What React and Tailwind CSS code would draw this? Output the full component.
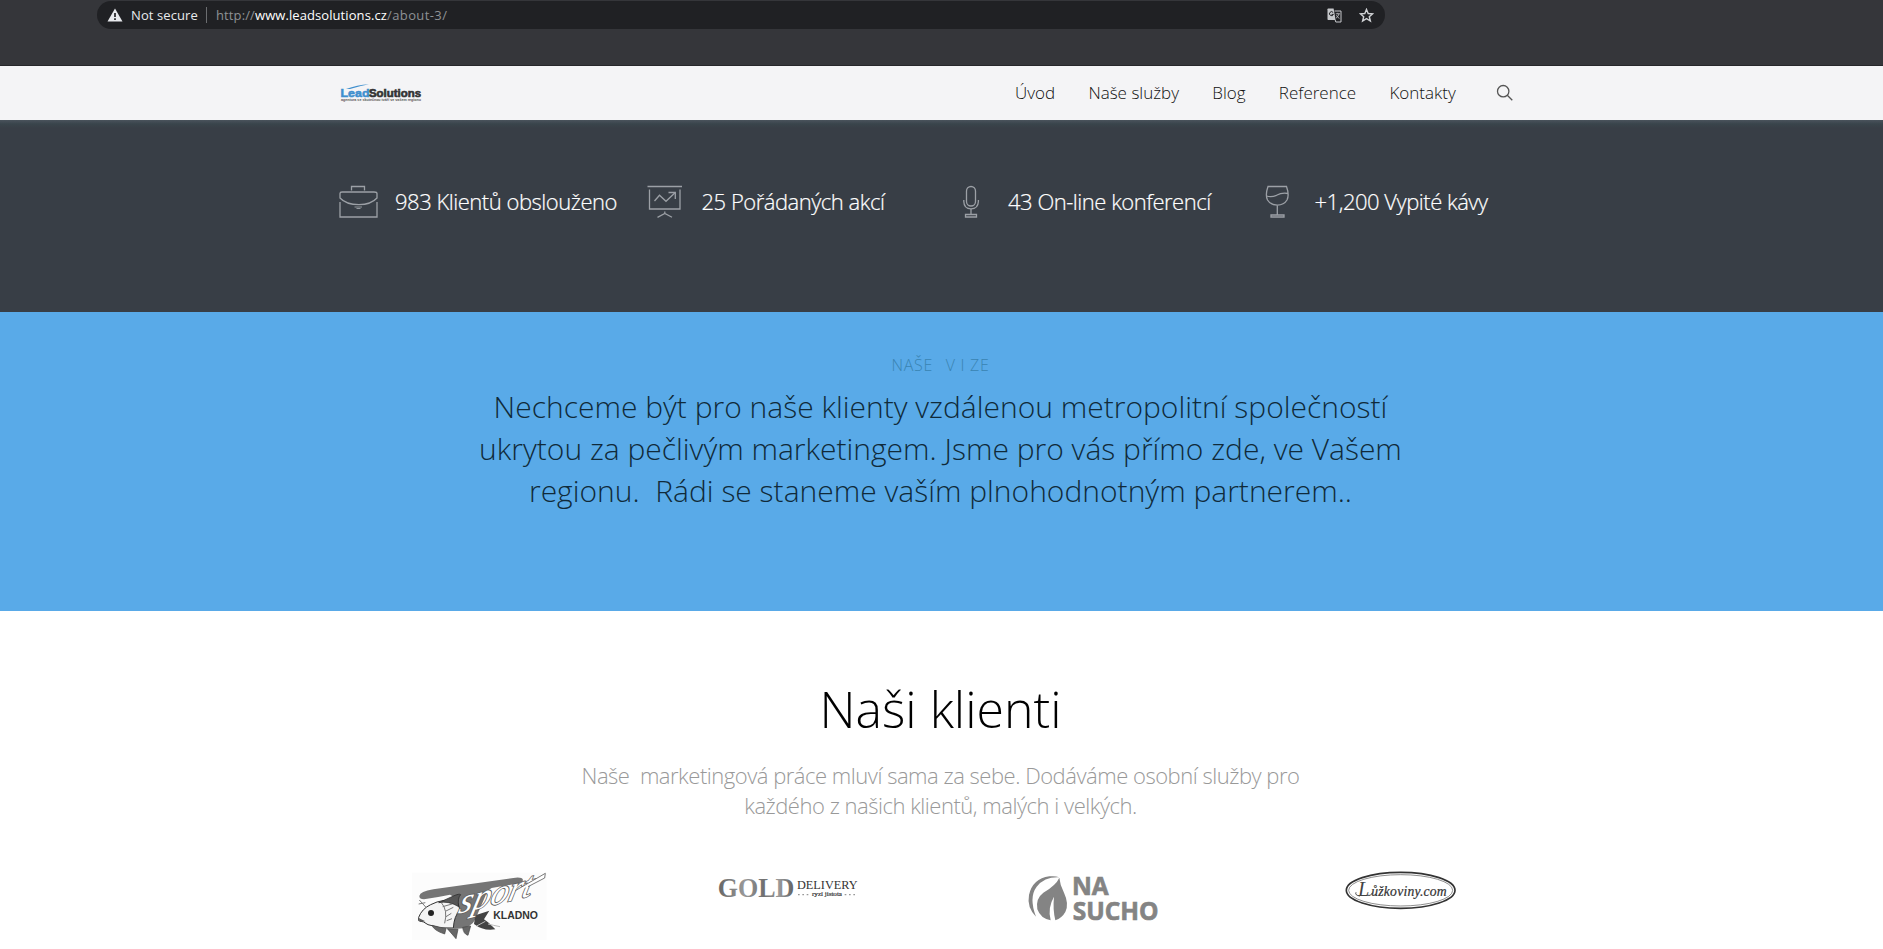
const NAV = ['Úvod', 'Naše služby', 'Blog', 'Reference', 'Kontakty'];

function BrowserBar() {
  return (
    <div className="h-[66px] border-b border-[#26272a] bg-[#35363a] pl-[97px] pt-px">
      <div className="flex h-7 w-[1288px] items-center rounded-full bg-[#202124] pl-[10px] pr-[11px] text-[13px]">
        <svg className="h-[14px] w-4" viewBox="0 0 16 14">
          <path d="M8 0.5 L15.5 13.5 H0.5 Z" fill="#e8eaed" />
          <path d="M8 5v4M8 10.3v1.7" stroke="#202124" strokeWidth="1.7" />
        </svg>
        <span className="ml-2 w-[67px] whitespace-nowrap pt-0.5 tracking-[0.1px] text-[#e8eaed]">Not secure</span>
        <span className="ml-2 h-4 w-px bg-[#6b6d70]" />
        <div className="ml-[9px] flex whitespace-nowrap pt-0.5 text-[#8e9195]">
          <span className="w-[39px] tracking-[0.12px]">http://</span>
          <span className="w-[132px] tracking-[0.08px] text-white">www.leadsolutions.cz</span>
          <span className="tracking-[0.4px]">/about-3/</span>
        </div>
        <svg className="ml-auto h-[15px] w-[15px]" viewBox="0 0 15 15">
          <path d="M1.2 0.5H6.6L8.6 12H1.2Q0.5 12 0.5 11.3V1.2Q0.5 0.5 1.2 0.5Z" fill="#c6c8cb" />
          <path d="M7.5 3H14V14H8.8L8.2 12" fill="none" stroke="#c6c8cb" />
          <path d="M6.2 4.6A2 2 0 1 0 6.4 6.4H4.6" fill="none" stroke="#202124" strokeWidth="1" />
          <path d="M8.8 5.8H13M10.8 4.8V5.8M12 5.8Q11.4 8.6 9 10.2M9.4 7.2Q10.4 9.4 12.4 10.4" fill="none" stroke="#c6c8cb" strokeWidth=".8" />
        </svg>
        <svg className="ml-[17px] h-[15px] w-[15px]" viewBox="0 0 15 15">
          <path d="M7.5 1.4L9.2 5.5L13.7 5.8L10.3 8.7L11.4 13L7.5 10.6L3.6 13L4.7 8.7L1.3 5.8L5.8 5.5Z" fill="none" stroke="#d0d2d5" strokeWidth="1.4" />
        </svg>
      </div>
    </div>
  );
}

function Header() {
  return (
    <header className="flex h-[54px] items-center bg-[#f4f4f6] pl-[340px]">
      <svg className="h-[19px] w-[83px] shrink-0" viewBox="0 0 83 19">
        <path d="M6 5Q17 .8 29 .2Q19 2 10 5Z" fill="#3f8fce" />
        <text x=".5" y="12.6" fontFamily="Liberation Sans" fontWeight="700" fontSize="10.5" fill="#3f8fce" stroke="#3f8fce" strokeWidth=".5" textLength="29" lengthAdjust="spacingAndGlyphs">Lead</text>
        <text x="29" y="12.6" fontFamily="Liberation Sans" fontWeight="700" fontSize="10.5" fill="#333" stroke="#333" strokeWidth=".6" textLength="52" lengthAdjust="spacingAndGlyphs">Solutions</text>
        <text x="1" y="17" fontFamily="Liberation Sans" fontWeight="700" fontSize="3.2" fill="#555" textLength="80" lengthAdjust="spacingAndGlyphs">agentura se skutečnou tváří ve vašem regionu</text>
      </svg>
      <nav className="ml-[592px] flex gap-[33.3px] whitespace-nowrap text-[17px] font-light text-[#111]">
        {NAV.map((n) => (
          <a key={n}>{n}</a>
        ))}
      </nav>
      <svg className="ml-[40px] h-[18px] w-[18px]" viewBox="0 0 18 18" fill="none" stroke="#555" strokeWidth="1.3">
        <circle cx="7.2" cy="7.2" r="5.7" />
        <path d="M11.3 11.3L16.3 16.2" />
      </svg>
    </header>
  );
}

const ICONS = [
  <g key="case">
    <path d="M12.5 7.5V3.5H25.5V7.5" />
    <path d="M3 9H35Q38 9 38 10.5V15Q32 21.6 20 21.6Q7 21.6 1 15V10.5Q1 9 3 9Z" />
    <path d="M1 19V34H38V19" />
    <path d="M15.5 24H23M17.5 25.5H21.5" strokeWidth=".9" />
  </g>,
  <g key="easel">
    <path d="M1.5 3.5H36" />
    <path d="M3.5 6.5V26H34V6.5" />
    <path d="M8.5 18L13.5 12.3L20 18.3L29 9.8" />
    <path d="M22.5 9.5H29.3V16" />
    <path d="M18.8 28.5V31M11.5 34.3L18.8 30.5L26 34.3" />
  </g>,
  <g key="mic">
    <rect x="14.5" y="3.5" width="9" height="19.5" rx="4.5" />
    <path d="M11.8 17V18.5Q12 25.8 19 25.8Q26 25.8 26.4 18.5V17" />
    <path d="M19 26V31.3M13.5 34V31.5H24.5V34Z" />
  </g>,
  <g key="glass">
    <path d="M9 3.5H27.5Q30.5 12 28 17Q25 22 18.3 22.2Q11.5 22 8.5 17Q6 12 9 3.5Z" />
    <path d="M7.5 13Q12.5 14.5 17.5 12.3Q23 9.3 29 10.5" />
    <path d="M18.3 22.5V31.5M12 34V32H25V34Z" />
  </g>,
];
const STATS = ['983 Klientů obslouženo', '25 Pořádaných akcí', '43 On-line konferencí', '+1,200 Vypité kávy'];

function Stats() {
  return (
    <section className="h-48 bg-[#383e46] bg-[linear-gradient(#4a535c,#39444b_4px,#383e46_8px)] pl-[339px] pt-[63px]">
      <div className="grid w-[1226px] grid-cols-4">
        {STATS.map((t, i) => (
          <div key={t} className="flex items-start">
            <svg className="h-9 w-10 shrink-0" viewBox="0 0 40 36" fill="none" stroke="#9ca0a6" strokeWidth="1.3">
              {ICONS[i]}
            </svg>
            <p className="ml-4 mt-[3px] whitespace-nowrap text-[22px] font-light leading-[30px] tracking-[-0.48px] text-white [-webkit-text-stroke:0.2px_white]">{t}</p>
          </div>
        ))}
      </div>
    </section>
  );
}

function Vision() {
  return (
    <section className="h-[299px] bg-[#59aae8] pr-[2px] pt-[41px] text-center font-light">
      <p className="whitespace-pre text-[16px] leading-6 tracking-[0.7px] text-[#3a84b2]">
        <span className="mr-[3px]">{'NAŠE  '}</span>V I ZE
      </p>
      <p className="mt-[9px] whitespace-pre text-[30px] leading-[42px] text-[#102a3a]">
        {'Nechceme být pro naše klienty vzdálenou metropolitní společností\nukrytou za pečlivým marketingem. Jsme pro vás přímo zde, ve Vašem\nregionu.  Rádi se staneme vaším plnohodnotným partnerem..'}
      </p>
    </section>
  );
}

function SportKladno() {
  return (
    <svg className="h-[89px] w-40 shrink-0" viewBox="0 0 480 267">
      <path d="M36 38H440V240H36Z" fill="#fcfcfc" />
      <path d="M58 108Q60 94 100 88L340 54Q366 50 369 60Q368 70 345 72L275 84Q262 90 256 108L226 178Q212 210 160 206L158 150Q170 110 150 104Q110 112 72 118Q58 118 58 108Z" fill="#757575" />
      <path d="M56 172Q66 146 92 134Q130 114 172 124L180 150Q162 168 160 204Q120 208 84 194Q72 184 56 182Z" fill="#f4f4f4" stroke="#333" strokeWidth="3" />
      <path d="M116 128L160 108Q178 100 182 104Q172 114 176 140Q146 122 116 128Z" fill="#555" stroke="#222" strokeWidth="2" />
      <path d="M124 128Q144 150 134 190M128 140L156 132M136 154L160 142M138 170L154 160M140 182L156 176M58 120L78 142M56 132L76 128" stroke="#777" strokeWidth="3" fill="none" />
      <circle cx="93" cy="159" r="9" fill="#222" />
      <path d="M56 174L76 184L60 186Z" fill="#555" />
      <path d="M96 196Q102 212 134 222L138 206ZM142 206L168 236L174 208ZM188 202Q190 222 204 226L212 198Z" fill="#666" stroke="#444" strokeWidth="2" />
      <path d="M226 166L268 152L252 178L266 188L286 208Q250 214 222 192Z" fill="#444" />
      <path d="M230 198L256 184M264 192Q280 196 300 200" stroke="#bbb" strokeWidth="3" fill="none" />
      <text transform="translate(172 162) rotate(-14) skewX(-28)" fontFamily="Liberation Serif" fontStyle="italic" fontWeight="400" fontSize="98" fill="#fff" stroke="#606060" strokeWidth="5" paintOrder="stroke" textLength="226" lengthAdjust="spacingAndGlyphs">sport</text>
      <path d="M346 92L436 40L434 54L384 80" fill="#fff" stroke="#606060" strokeWidth="2.5" />
      <text x="280" y="177" fontFamily="Liberation Sans" fontWeight="700" fontSize="32" fill="#333" textLength="134" lengthAdjust="spacingAndGlyphs">KLADNO</text>
    </svg>
  );
}

function GoldDelivery() {
  return (
    <svg className="ml-[140px] h-[60px] w-[180px] shrink-0" viewBox="0 0 540 180">
      <defs>
        <linearGradient id="gold">
          <stop offset="0" stopColor="#666" />
          <stop offset=".35" stopColor="#999" />
          <stop offset=".6" stopColor="#707070" />
          <stop offset=".8" stopColor="#999" />
          <stop offset="1" stopColor="#606060" />
        </linearGradient>
      </defs>
      <text x="53" y="110" fontFamily="Liberation Serif" fontWeight="700" fontSize="79" fill="url(#gold)" textLength="230" lengthAdjust="spacingAndGlyphs">GOLD</text>
      <text x="291" y="86" fontFamily="Liberation Serif" fontSize="35" fill="#333" textLength="182" lengthAdjust="spacingAndGlyphs">DELIVERY</text>
      <text x="336" y="109" fontFamily="Liberation Serif" fontSize="19" fill="#444" stroke="#444" strokeWidth=".7" textLength="90" lengthAdjust="spacingAndGlyphs">ryzí jistota</text>
      <path d="M294 104H326M434 104H468" stroke="#999" strokeWidth="4" strokeDasharray="5 8" />
    </svg>
  );
}

function NaSucho() {
  return (
    <svg className="ml-[130px] h-20 w-[170px] shrink-0" viewBox="0 0 510 240" fill="#848484">
      <path d="M78 170Q50 142 57 105Q68 56 118 49Q136 47 148 52Q104 50 80 80Q56 112 78 170Z" />
      <path d="M148 53Q150 76 162 98Q178 132 166 156Q156 174 136 181Q128 148 132 110Q112 144 122 181Q92 176 82 148Q76 116 100 98Q138 76 148 53Z" />
      <g fontFamily="Open Sans" fontWeight="700" fontSize="77" stroke="#848484" strokeWidth="2">
        <text x="186" y="105" textLength="110" lengthAdjust="spacingAndGlyphs">NA</text>
        <text x="188" y="180" textLength="258" lengthAdjust="spacingAndGlyphs">SUCHO</text>
      </g>
    </svg>
  );
}

function Luzkoviny() {
  return (
    <svg className="ml-[150px] h-[60px] w-[140px] shrink-0" viewBox="0 0 420 180">
      <ellipse cx="212" cy="91" rx="163" ry="54" fill="#fff" stroke="#333" strokeWidth="5" />
      <ellipse cx="212" cy="91" rx="156" ry="47" fill="none" stroke="#555" strokeWidth="2" />
      <text x="84" y="109" fontFamily="Liberation Serif" fontStyle="italic" fontSize="66" fill="#444" textLength="34" lengthAdjust="spacingAndGlyphs">L</text>
      <path d="M90 108Q74 106 78 97M112 106Q122 110 128 98" fill="none" stroke="#444" strokeWidth="3" />
      <text x="124" y="109" fontFamily="Liberation Serif" fontStyle="italic" fontSize="41" fill="#333" stroke="#333" strokeWidth=".6" textLength="226">ůžkoviny.com</text>
    </svg>
  );
}

export default function App() {
  return (
    <div className="h-[949px] w-[1883px] overflow-hidden bg-white font-['Open_Sans',sans-serif]">
      <BrowserBar />
      <Header />
      <Stats />
      <Vision />
      <section className="pt-[68px] text-center font-light">
        <h2 className="pr-[2px] text-[50px] leading-[60px] text-black">Naši klienti</h2>
        <p className="mt-[21px] whitespace-pre pr-[2px] text-[22px] leading-[30px] tracking-[-0.48px] text-[#999]">
          {'Naše  marketingová práce mluví sama za sebe. Dodáváme osobní služby pro\nkaždého z našich klientů, malých i velkých.'}
        </p>
        <div className="mt-10 flex items-start pl-[400px]">
          <SportKladno />
          <GoldDelivery />
          <NaSucho />
          <Luzkoviny />
        </div>
      </section>
    </div>
  );
}
